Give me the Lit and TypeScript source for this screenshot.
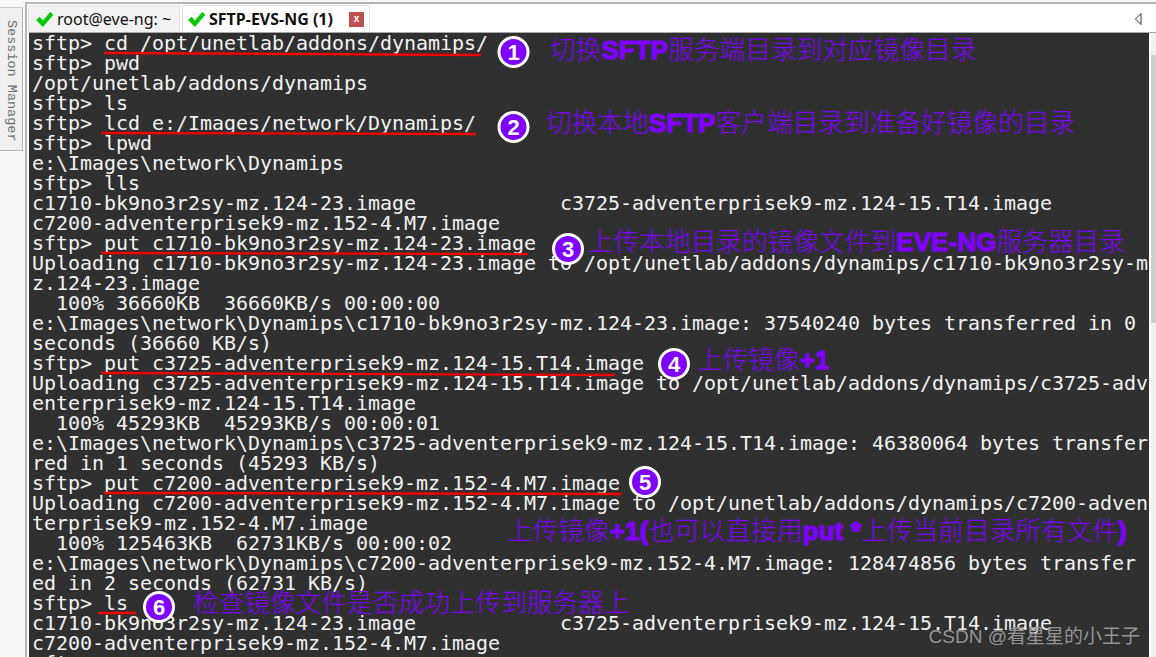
import { LitElement, html, css, svg } from "lit";
import { customElement } from "lit/decorators.js";

const LINES = [
  "sftp> cd /opt/unetlab/addons/dynamips/",
  "sftp> pwd",
  "/opt/unetlab/addons/dynamips",
  "sftp> ls",
  "sftp> lcd e:/Images/network/Dynamips/",
  "sftp> lpwd",
  "e:\\Images\\network\\Dynamips",
  "sftp> lls",
  "c1710-bk9no3r2sy-mz.124-23.image            c3725-adventerprisek9-mz.124-15.T14.image",
  "c7200-adventerprisek9-mz.152-4.M7.image",
  "sftp> put c1710-bk9no3r2sy-mz.124-23.image",
  "Uploading c1710-bk9no3r2sy-mz.124-23.image to /opt/unetlab/addons/dynamips/c1710-bk9no3r2sy-m",
  "z.124-23.image",
  "  100% 36660KB  36660KB/s 00:00:00",
  "e:\\Images\\network\\Dynamips\\c1710-bk9no3r2sy-mz.124-23.image: 37540240 bytes transferred in 0",
  "seconds (36660 KB/s)",
  "sftp> put c3725-adventerprisek9-mz.124-15.T14.image",
  "Uploading c3725-adventerprisek9-mz.124-15.T14.image to /opt/unetlab/addons/dynamips/c3725-adv",
  "enterprisek9-mz.124-15.T14.image",
  "  100% 45293KB  45293KB/s 00:00:01",
  "e:\\Images\\network\\Dynamips\\c3725-adventerprisek9-mz.124-15.T14.image: 46380064 bytes transfer",
  "red in 1 seconds (45293 KB/s)",
  "sftp> put c7200-adventerprisek9-mz.152-4.M7.image",
  "Uploading c7200-adventerprisek9-mz.152-4.M7.image to /opt/unetlab/addons/dynamips/c7200-adven",
  "terprisek9-mz.152-4.M7.image",
  "  100% 125463KB  62731KB/s 00:00:02",
  "e:\\Images\\network\\Dynamips\\c7200-adventerprisek9-mz.152-4.M7.image: 128474856 bytes transfer",
  "ed in 2 seconds (62731 KB/s)",
  "sftp> ls",
  "c1710-bk9no3r2sy-mz.124-23.image            c3725-adventerprisek9-mz.124-15.T14.image",
  "c7200-adventerprisek9-mz.152-4.M7.image",
  "sftp> ",
];

// Red hand-drawn underlines, in page coordinates: x1, y1, x2, y2
const UNDERLINES = [
  [104, 53, 481, 55],
  [101, 133, 476, 134],
  [101, 253, 528, 254],
  [101, 373, 615, 375],
  [104, 493, 622, 494],
  [98, 613, 136, 613],
];

// Badges: number, centre x, centre y
const BADGES: [number, number, number][] = [
  [1, 513.5, 52],
  [2, 513.5, 127],
  [3, 568, 249],
  [4, 674, 364],
  [5, 645, 482],
  [6, 159, 607],
];

// Callouts: left, top, segments (odd segments are the bold Latin runs)
const NOTES: [number, number, string][] = [
  [550, 34, "切换|SFTP|服务端目录到对应镜像目录"],
  [546, 107, "切换本地|SFTP|客户端目录到准备好镜像的目录"],
  [588, 226, "上传本地目录的镜像文件到|EVE-NG|服务器目录"],
  [697, 344, "上传镜像|+1|"],
  [507, 515, "上传镜像|+1(|也可以直接用|put *|上传当前目录所有文件|)|"],
  [193, 587, "检查镜像文件是否成功上传到服务器上"],
];

@customElement("app-root")
export class AppRoot extends LitElement {
  static styles = css`
    :host {
      display: block;
      width: 1156px;
      height: 657px;
      overflow: hidden;
      position: relative;
      background: #f8f8f8;
      font-family: "Noto Sans", "Noto Sans CJK SC", sans-serif;
    }
    .frame { display: flex; height: 657px; }
    .side {
      flex: none;
      width: 23px;
      margin-top: 7px;
      margin-right: 2px;
      height: 144px;
      border: 1px solid #b4b4b4;
      border-left: none;
      border-top-color: #c8c8c8;
      background: #f0f0f0;
      box-sizing: border-box;
      display: flex;
      justify-content: center;
    }
    .side span {
      writing-mode: vertical-rl;
      font: 13.5px/22px "Liberation Mono", monospace;
      color: #6e6e6e;
      padding-top: 12px;
      white-space: nowrap;
    }
    .main {
      flex: none;
      width: 1131px;
      box-sizing: border-box;
      display: flex;
      flex-direction: column;
      margin-top: 2px;
      border-top: 2px solid #b5b5b5;
      border-left: 2px solid #b5b5b5;
      padding-left: 2px;
      background: #fff;
    }
    .tabs {
      flex: none;
      height: 29px;
      display: flex;
      align-items: flex-start;
      box-sizing: border-box;
      padding-top: 1px;
      border-bottom: 1px solid #a8a8a8;
    }
    .tab {
      display: flex;
      align-items: center;
      height: 27px;
      box-sizing: border-box;
      border: 1px solid #e4e4e4;
      border-bottom: none;
      white-space: nowrap;
      color: #111;
    }
    .tab.a { width: 152px; background: #f2f2f2; font-size: 16px; padding-left: 6px; gap: 3px; margin-left: -1px; }
    .tab.b { width: 188px; background: #fff; font-size: 16px; font-weight: 700; padding-left: 4px; gap: 3px; margin-left: 2px; }
    .x {
      width: 15px;
      height: 15px;
      background: #c0504d;
      color: #fff;
      font: 700 10px/14px "Liberation Sans", sans-serif;
      text-align: center;
      margin-left: 13px;
      flex: none;
    }
    .arrow { margin-left: auto; margin-right: 14px; align-self: center; display: block; }
    .term {
      flex: 1;
      display: flex;
      background: #303030;
      overflow: hidden;
    }
    .body { width: 1120px; flex: none; padding-left: 3px; box-sizing: border-box; overflow: hidden; }
    pre {
      margin: 0;
      font: 20px/20px "DejaVu Sans Mono", monospace;
      letter-spacing: -0.04px;
      color: #f2f2f2;
      white-space: pre;
      height: 20px;
    }
    .bar { flex: 1; background: #fff; padding-left: 2px; }
    .track { height: 100%; background: #f0f0f0; padding-top: 22px; box-sizing: border-box; }
    .thumb { height: 268px; background: #cdcdcd; }
    .over { position: absolute; inset: 0; pointer-events: none; }
    .note {
      position: absolute;
      color: #7f00ff;
      font: 300 25.7px/28px "Noto Sans CJK SC", sans-serif;
      white-space: nowrap;
    }
    .note b {
      font: 900 25.7px/28px "Liberation Sans", "Noto Sans CJK SC", sans-serif;
      -webkit-text-stroke: 1.2px #7f00ff;
      letter-spacing: 0.3px;
    }
    .mark {
      position: absolute;
      right: 16px;
      bottom: 8px;
      color: rgba(225, 225, 225, 0.62);
      font: 19px/24px "Liberation Sans", "Noto Sans CJK SC", sans-serif;
      text-shadow: 0 0 1px #222;
      white-space: nowrap;
    }
  `;

  private check() {
    return svg`<svg width="19" height="17" viewBox="0 0 18 16"><path d="M1 8.5 L4.5 5.5 L7.5 9 L14.5 1 L17.5 3.5 L7.5 15 Z" fill="#08c808"/></svg>`;
  }

  private note(n: [number, number, string]) {
    const parts = n[2].split("|");
    return html`<div class="note" style="left:${n[0]}px;top:${n[1]}px">${parts.map((p, i) =>
      i % 2 ? html`<b>${p}</b>` : p
    )}</div>`;
  }

  render() {
    return html`
      <div class="frame">
        <div class="side"><span>Session Manager</span></div>
        <div class="main">
          <div class="tabs">
            <div class="tab a">${this.check()}<span>root@eve-ng: ~</span></div>
            <div class="tab b">${this.check()}<span>SFTP-EVS-NG (1)</span><span class="x">x</span></div>
            <svg class="arrow" width="7" height="12" viewBox="0 0 7 12"><path d="M6 .5V11.5L.5 6Z" fill="#fff" stroke="#333"/></svg>
          </div>
          <div class="term">
            <div class="body">${LINES.map((l) => html`<pre>${l}</pre>`)}</div>
            <div class="bar"><div class="track"><div class="thumb"></div></div></div>
          </div>
        </div>
      </div>
      <div class="over">
        <svg width="1156" height="657" style="position:absolute;left:0;top:0">
          ${UNDERLINES.map((u) => svg`<line x1=${u[0]} y1=${u[1]} x2=${u[2]} y2=${u[3]} stroke="#f00000" stroke-width="2.4"/>`)}
          ${BADGES.map((b) => svg`
            <circle cx=${b[1]} cy=${b[2]} r="14.5" fill="#7f00ff" stroke="#fff" stroke-width="3"/>
            <text x=${b[1]} y=${b[2] + 8} text-anchor="middle" fill="#fff" font-family="Liberation Sans" font-weight="700" font-size="22">${b[0]}</text>`)}
        </svg>
        ${NOTES.map((n) => this.note(n))}
        <div class="mark">CSDN @看星星的小王子</div>
      </div>
    `;
  }
}
